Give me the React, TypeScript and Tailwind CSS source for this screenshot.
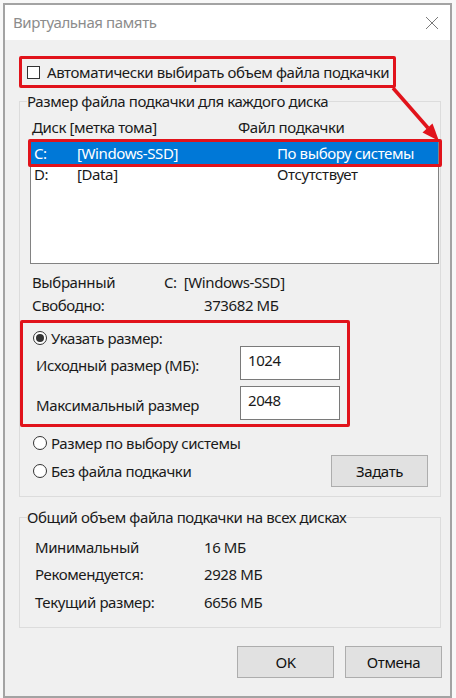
import React from 'react'

const font = { fontFamily: '"Noto Sans", "Open Sans", sans-serif' }

function Radio({ checked }: { checked?: boolean }) {
  return (
    <span className="flex h-[14px] w-[14px] shrink-0 items-center justify-center rounded-full border border-[#333] bg-white">
      {checked && <span className="h-[8px] w-[8px] rounded-full bg-[#333]" />}
    </span>
  )
}

function Button({ label }: { label: string }) {
  return (
    <button
      type="button"
      className="flex h-[32px] w-[97px] items-center justify-center border border-[#adadad] bg-[#e1e1e1] text-[15px] text-[#111]"
    >
      {label}
    </button>
  )
}

function Arrow() {
  return (
    <svg className="pointer-events-none absolute left-0 top-0" width="456" height="698">
      <line x1="393" y1="88" x2="428" y2="128" stroke="#e1131b" strokeWidth="3.5" />
      <polygon points="422.5,132.5 432.5,123.5 439,141" fill="#e1131b" />
    </svg>
  )
}

export default function App() {
  return (
    <div
      className="relative h-[698px] w-[456px] whitespace-nowrap bg-[#f8f8f8] pl-[3px] pt-[3px] text-[15px] tracking-[-0.4px] text-[#1a1a1a]"
      style={font}
    >
      <div className="flex h-[695px] w-[449px] flex-col border-2 border-[#a3a3a3]">
        {/* title bar */}
        <div className="flex h-[35px] shrink-0 items-center justify-between bg-white pl-[8px] pr-[11px]">
          <span className="text-[15px] text-[#8c8c8c]">Виртуальная память</span>
          <svg width="14" height="14" viewBox="0 0 14 14">
            <path d="M1 1 L13 13 M13 1 L1 13" stroke="#7a7a7a" strokeWidth="1" />
          </svg>
        </div>

        <div className="flex flex-1 flex-col bg-[#f0f0f0] pl-[14px] pt-[16px]">
          {/* auto checkbox */}
          <div className="flex h-[32px] w-[377px] items-center gap-[7px] rounded-[2px] border-[3px] border-[#e1131b] pl-[5px]">
            <span className="h-[13px] w-[13px] shrink-0 border border-[#333] bg-white" />
            <span className="leading-[20px]">Автоматически выбирать объем файла подкачки</span>
          </div>

          {/* per-disk group */}
          <fieldset className="mt-[3px] w-[422px] border border-[#dcdcdc] pb-[9px] pl-[7px]">
            <legend className="leading-[20px]">Размер файла подкачки для каждого диска</legend>
            <div className="-ml-[7px] flex flex-col">
              <div className="mt-[6px] flex h-[20px] items-center leading-[20px]">
                <span className="ml-[12px] w-[206px]">Диск [метка тома]</span>
                <span>Файл подкачки</span>
              </div>
              <div className="relative ml-[10px] mt-[3px] h-[124px] w-[409px] border border-[#828282] bg-white">
                <div className="flex h-[24px] items-center bg-[#0078d7] text-white">
                  <span className="ml-[3px] w-[43px]">C:</span>
                  <span className="w-[200px]">[Windows-SSD]</span>
                  <span>По выбору системы</span>
                </div>
                <div className="flex h-[19px] items-center">
                  <span className="ml-[3px] w-[43px]">D:</span>
                  <span className="w-[200px]">[Data]</span>
                  <span>Отсутствует</span>
                </div>
                <div className="pointer-events-none absolute -left-[3px] -top-[2px] h-[28px] w-[414px] rounded-[2px] border-[3px] border-[#e1131b]" />
              </div>

              <div className="mt-[8px] flex h-[20px] items-center">
                <span className="ml-[12px] w-[132px]">Выбранный</span>
                <span>C:&nbsp;&nbsp;[Windows-SSD]</span>
              </div>
              <div className="mt-[3px] flex h-[20px] items-center">
                <span className="ml-[12px] w-[172px]">Свободно:</span>
                <span>373682 МБ</span>
              </div>

              {/* custom size */}
              <div className="mt-[5px] flex h-[107px] w-[330px] flex-col rounded-[2px] border-[3px] border-[#e1131b]">
                <div className="ml-[10px] mt-[6px] flex h-[18px] items-center gap-[4px]">
                  <Radio checked />
                  <span>Указать размер:</span>
                </div>
                <div className="-mt-[1px] flex h-[34px] items-center">
                  <span className="ml-[13px] mt-[4px] w-[204px]">Исходный размер (МБ):</span>
                  <div className="h-[34px] w-[100px] border border-[#7a7a7a] bg-white pl-[7px] pt-[3px] leading-[20px]">1024</div>
                </div>
                <div className="mt-[6px] flex h-[34px] items-center">
                  <span className="ml-[13px] mt-[4px] w-[204px]">Максимальный размер</span>
                  <div className="h-[34px] w-[100px] border border-[#7a7a7a] bg-white pl-[7px] pt-[3px] leading-[20px]">2048</div>
                </div>
              </div>

              <div className="ml-[13px] mt-[6px] flex h-[20px] items-center gap-[4px]">
                <Radio />
                <span>Размер по выбору системы</span>
              </div>
              <div className="mt-[2px] flex h-[32px] items-center justify-between pr-[12px]">
                <div className="ml-[13px] flex items-center gap-[4px]">
                  <Radio />
                  <span>Без файла подкачки</span>
                </div>
                <Button label="Задать" />
              </div>
            </div>
          </fieldset>

          {/* totals group */}
          <fieldset className="mt-[10px] w-[422px] border border-[#dcdcdc] pb-[15px] pl-[7px]">
            <legend className="leading-[20px]">Общий объем файла подкачки на всех дисках</legend>
            <div className="-ml-[7px] flex flex-col">
              <div className="mt-[10px] flex h-[20px] items-center">
                <span className="ml-[15px] w-[169px]">Минимальный</span>
                <span>16 МБ</span>
              </div>
              <div className="mt-[7px] flex h-[20px] items-center">
                <span className="ml-[15px] w-[169px]">Рекомендуется:</span>
                <span>2928 МБ</span>
              </div>
              <div className="mt-[8px] flex h-[20px] items-center">
                <span className="ml-[15px] w-[169px]">Текущий размер:</span>
                <span>6656 МБ</span>
              </div>
            </div>
          </fieldset>

          <div className="mr-[8px] mt-[18px] flex justify-end gap-[11px]">
            <Button label="OK" />
            <Button label="Отмена" />
          </div>
        </div>
      </div>
      <Arrow />
    </div>
  )
}
